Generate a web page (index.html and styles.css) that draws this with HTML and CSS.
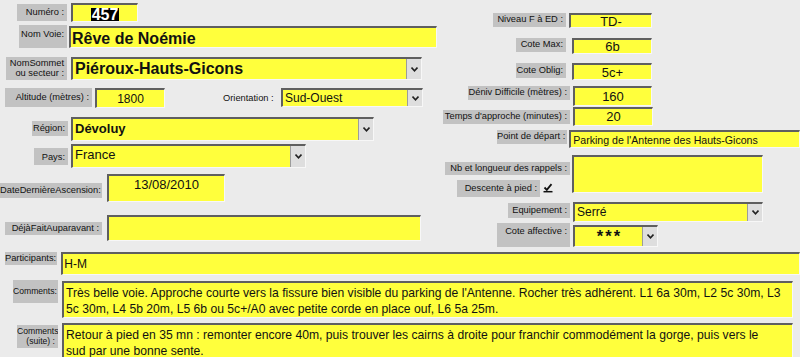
FILE: index.html
```html
<!DOCTYPE html>
<html lang="fr">
<head>
    <meta charset="UTF-8">
    <title>Fiche Voie</title>
    <link rel="stylesheet" href="styles.css">
</head>
<body>
    <div class="form">
        <div class="top">
            <!-- colonne gauche -->
            <div class="col-left">
                <div class="row r1">
                    <div class="lbl l-numero">Numéro :</div>
                    <div class="fld f-numero t-center"><span class="selected">457</span></div>
                </div>
                <div class="row r2">
                    <div class="lbl l-nomvoie">Nom Voie:</div>
                    <div class="fld f-nomvoie t-big">Rêve de Noémie</div>
                </div>
                <div class="row r3">
                    <div class="lbl l-sommet">NomSommet<br>ou secteur :</div>
                    <div class="fld combo f-sommet"><span class="val t-big">Piéroux-Hauts-Gicons</span><span class="drop"><svg width="7" height="5" viewBox="0 0 7 5"><path d="M0.5 0.5 L3.5 3.8 L6.5 0.5" fill="none" stroke="#222" stroke-width="1.6"/></svg></span></div>
                </div>
                <div class="row r4">
                    <div class="lbl l-altitude">Altitude (mètres) :</div>
                    <div class="fld f-altitude t-center t-12">1800</div>
                    <div class="plain l-orient">Orientation :</div>
                    <div class="fld combo f-orient"><span class="val t-12">Sud-Ouest</span><span class="drop"><svg width="7" height="5" viewBox="0 0 7 5"><path d="M0.5 0.5 L3.5 3.8 L6.5 0.5" fill="none" stroke="#222" stroke-width="1.6"/></svg></span></div>
                </div>
                <div class="row r5">
                    <div class="lbl l-region">Région:</div>
                    <div class="fld combo f-region"><span class="val t-13b">Dévoluy</span><span class="drop"><svg width="7" height="5" viewBox="0 0 7 5"><path d="M0.5 0.5 L3.5 3.8 L6.5 0.5" fill="none" stroke="#222" stroke-width="1.6"/></svg></span></div>
                </div>
                <div class="row r6">
                    <div class="lbl l-pays">Pays:</div>
                    <div class="fld combo f-pays"><span class="val t-13">France</span><span class="drop"><svg width="7" height="5" viewBox="0 0 7 5"><path d="M0.5 0.5 L3.5 3.8 L6.5 0.5" fill="none" stroke="#222" stroke-width="1.6"/></svg></span></div>
                </div>
                <div class="row r7">
                    <div class="lbl l-date">DateDernièreAscension:</div>
                    <div class="fld f-date t-center t-13">13/08/2010</div>
                </div>
                <div class="row r8">
                    <div class="lbl l-deja">DéjàFaitAuparavant :</div>
                    <div class="fld f-deja"></div>
                </div>
            </div>

            <!-- colonne droite -->
            <div class="col-right">
                <div class="row a1">
                    <div class="lbl l-niveau">Niveau F à ED :</div>
                    <div class="fld f-niveau t-center t-13">TD-</div>
                </div>
                <div class="row a2">
                    <div class="lbl l-cmax">Cote Max:</div>
                    <div class="fld f-cmax t-center t-13">6b</div>
                </div>
                <div class="row a3">
                    <div class="lbl l-coblig">Cote Oblig:</div>
                    <div class="fld f-coblig t-center t-13">5c+</div>
                </div>
                <div class="row a4">
                    <div class="lbl l-deniv">Déniv Difficile (mètres) :</div>
                    <div class="fld f-deniv t-center t-13">160</div>
                </div>
                <div class="row a5">
                    <div class="lbl l-temps">Temps d'approche (minutes) :</div>
                    <div class="fld f-temps t-center t-13">20</div>
                </div>
                <div class="row a6">
                    <div class="lbl l-depart">Point de départ :</div>
                    <div class="fld f-depart t-11">Parking de l'Antenne des Hauts-Gicons</div>
                </div>
                <div class="row a7">
                    <div class="stack">
                        <div class="lbl l-rappels">Nb et longueur des rappels :</div>
                        <div class="descente">
                            <div class="lbl l-descente">Descente à pied :</div>
                            <svg class="check" width="10" height="10" viewBox="0 0 10 10"><path d="M1.5 4.5 L3.8 6.8 L8.5 1.2" fill="none" stroke="#111" stroke-width="1.8"/><path d="M0.5 8.7 H9.5" stroke="#111" stroke-width="1.5"/></svg>
                        </div>
                    </div>
                    <div class="fld f-rappels"></div>
                </div>
                <div class="row a8">
                    <div class="lbl l-equip">Equipement :</div>
                    <div class="fld combo f-equip"><span class="val t-12">Serré</span><span class="drop"><svg width="7" height="5" viewBox="0 0 7 5"><path d="M0.5 0.5 L3.5 3.8 L6.5 0.5" fill="none" stroke="#222" stroke-width="1.6"/></svg></span></div>
                </div>
                <div class="row a9">
                    <div class="lbl l-affect">Cote affective :</div>
                    <div class="fld combo f-affect"><span class="val t-center stars">***</span><span class="drop"><svg width="7" height="5" viewBox="0 0 7 5"><path d="M0.5 0.5 L3.5 3.8 L6.5 0.5" fill="none" stroke="#222" stroke-width="1.6"/></svg></span></div>
                </div>
            </div>
        </div>

        <div class="bottom">
            <div class="row b1">
                <div class="lbl l-part">Participants:</div>
                <div class="fld f-part t-12">H-M</div>
            </div>
            <div class="row b2">
                <div class="lbl l-comm">Comments:</div>
                <div class="fld f-comm t-memo">Très belle voie. Approche courte vers la fissure bien visible du parking de l'Antenne. Rocher très adhérent. L1 6a 30m, L2 5c 30m, L3<br>5c 30m, L4 5b 20m, L5 6b ou 5c+/A0 avec petite corde en place ouf, L6 5a 25m.</div>
            </div>
            <div class="row b3">
                <div class="lbl l-suite">Comments<br>(suite) :</div>
                <div class="fld f-suite t-memo">Retour à pied en 35 mn : remonter encore 40m, puis trouver les cairns à droite pour franchir commodément la gorge, puis vers le<br>sud par une bonne sente.</div>
            </div>
        </div>
    </div>
</body>
</html>
```

FILE: styles.css
```css
body {
    margin: 0;
    background-color: #ebebeb;
    font-family: "Liberation Sans", Arial, sans-serif;
    color: #111;
}
.form {
    width: 800px;
    height: 357px;
    overflow: hidden;
}
.top {
    display: flex;
    height: 250px;
}
.col-left {
    width: 440px;
    padding-top: 3px;
    box-sizing: border-box;
}
.col-right {
    width: 360px;
    padding-top: 13px;
    box-sizing: border-box;
}
.row {
    display: flex;
    align-items: flex-start;
}

/* etiquettes grises */
.lbl {
    background-color: #c2c2c2;
    font-size: 9.3px;
    line-height: 11px;
    color: #111;
    text-align: right;
    padding: 2px 3px 0 0;
    box-sizing: border-box;
    white-space: nowrap;
    overflow: hidden;
}
.plain {
    font-size: 9.3px;
    line-height: 11px;
    color: #111;
    white-space: nowrap;
}

/* champs jaunes */
.fld {
    background-color: #ffff3c;
    border-top: 2px solid #5f5f5f;
    border-left: 2px solid #5f5f5f;
    border-right: 1px solid #f7f7f7;
    border-bottom: 1px solid #f7f7f7;
    box-sizing: border-box;
    padding: 0 2px;
    white-space: nowrap;
    overflow: hidden;
    color: #111;
}
.combo {
    display: flex;
    align-items: stretch;
    padding: 0;
}
.combo .val {
    flex: 1;
    padding-left: 2px;
    overflow: hidden;
}
.drop {
    width: 14px;
    flex: none;
    background-color: #dedede;
    border-left: 1px solid #9c9c9c;
    display: flex;
    align-items: center;
    justify-content: center;
}
.t-center { text-align: center; }
.t-big { font-size: 16px; font-weight: bold; line-height: 18px; }
.t-13b { font-size: 13px; font-weight: bold; line-height: 16px; }
.t-13 { font-size: 13px; line-height: 15px; }
.t-12 { font-size: 12px; line-height: 15px; }
.t-11 { font-size: 10.6px; line-height: 14px; }
.t-memo {
    font-size: 12.15px;
    line-height: 16px;
    padding: 2px 0 0 2px;
}
.stars {
    font-size: 16.5px;
    font-weight: bold;
    line-height: 18px;
    letter-spacing: 2px;
    padding-left: 4px;
}
.selected {
    display: inline-block;
    background: #000;
    color: #fff;
    font-size: 16px;
    font-weight: bold;
    line-height: 14px;
    margin-top: 3px;
    padding: 0 1px;
}

/* gauche */
.r1 { height: 22px; }
.r2 { height: 32px; }
.r3 { height: 31px; }
.r4 { height: 29px; }
.r5 { height: 27px; }
.r6 { height: 30px; }
.r7 { height: 41px; }
.r8 { height: 35px; }

.l-numero { margin: 1px 0 0 17px; width: 50px; height: 17px; padding-top: 3px; }
.f-numero { margin-left: 4px; width: 67px; height: 19px; }
.l-nomvoie { margin-left: 19px; width: 48px; height: 23px; padding-top: 4px; }
.f-nomvoie { margin: 1px 0 0 2px; width: 368px; height: 22px; padding: 2px 0 0 1px; }
.l-sommet { margin-left: 6px; width: 61px; height: 23px; padding-top: 1px; line-height: 10px; }
.f-sommet { margin-left: 4px; width: 351px; height: 23px; }
.f-sommet .val { padding-top: 1px; }
.l-altitude { margin-left: 5px; width: 87px; height: 19px; padding-top: 4px; }
.f-altitude { margin-left: 3px; width: 70px; height: 20px; padding-top: 2px; }
.l-orient { margin: 5px 0 0 58px; width: 52px; }
.f-orient { margin-left: 6px; width: 142px; height: 19px; }
.f-orient .val { padding-top: 1px; }
.l-region { margin: 4px 0 0 32px; width: 36px; height: 15px; }
.f-region { margin-left: 3px; width: 303px; height: 24px; }
.f-region .val { padding-top: 2px; }
.l-pays { margin: 4px 0 0 34px; width: 34px; height: 17px; padding-top: 4px; }
.f-pays { margin-left: 3px; width: 235px; height: 24px; }
.f-pays .val { padding-top: 1px; }
.l-date { margin: 9px 0 0 0; width: 102px; height: 15px; }
.f-date { margin-left: 5px; width: 118px; height: 28px; padding-top: 1px; }
.l-deja { margin: 7px 0 0 5px; width: 97px; height: 13px; padding-top: 1px; }
.f-deja { margin-left: 5px; width: 314px; height: 26px; }

/* droite */
.a1 { height: 25px; }
.a2 { height: 25px; }
.a3 { height: 23px; }
.a4 { height: 21px; }
.a5 { height: 23px; }
.a6 { height: 25px; }
.a7 { height: 47px; }
.a8 { height: 21px; }
.a9 { height: 27px; }

.l-niveau { margin-left: 53px; width: 73px; height: 14px; padding-top: 1px; }
.f-niveau { margin-left: 3px; width: 83px; height: 15px; line-height: 13px; }
.l-cmax { margin-left: 76px; width: 50px; height: 14px; padding-top: 1px; }
.f-cmax { margin-left: 6px; width: 80px; height: 16px; line-height: 14px; }
.l-coblig { margin-left: 76px; width: 50px; height: 15px; }
.f-coblig { margin-left: 6px; width: 80px; height: 17px; }
.l-deniv { margin-left: 28px; width: 102px; height: 14px; padding-top: 1px; }
.f-deniv { margin-left: 3px; width: 79px; height: 20px; padding-top: 1px; }
.l-temps { margin: 3px 0 0 3px; width: 127px; height: 14px; padding-top: 1px; }
.f-temps { margin-left: 3px; width: 80px; height: 19px; }
.l-depart { margin-left: 57px; width: 73px; height: 14px; padding-top: 1px; }
.f-depart { margin-left: 2px; width: 240px; height: 18px; padding-top: 1px; }
.stack { margin-left: 5px; width: 125px; }
.l-rappels { margin-top: 7px; width: 125px; height: 13px; padding-top: 1px; }
.descente { display: flex; align-items: flex-start; margin-top: 5px; }
.l-descente { margin-left: 12px; width: 83px; height: 17px; padding-top: 3px; }
.check { margin: 3px 0 0 3px; }
.f-rappels { margin-left: 2px; width: 191px; height: 38px; }
.l-equip { margin: 1px 0 0 68px; width: 62px; height: 15px; }
.f-equip { margin-left: 3px; width: 190px; height: 20px; }
.f-equip .val { padding-top: 1px; }
.l-affect { margin-left: 57px; width: 73px; height: 24px; padding-top: 3px; }
.f-affect { margin: 2px 0 0 3px; width: 85px; height: 22px; }

/* bas */
.bottom {
    padding-top: 2px;
}
.b1 { height: 28px; }
.b2 { height: 43px; }
.b3 { height: 40px; }
.l-part { margin-left: 5px; width: 53px; height: 13px; padding-top: 1px; }
.f-part { margin-left: 4px; width: 750px; height: 23px; padding: 3px 0 0 1px; }
.l-comm { margin-left: 13px; width: 45px; height: 23px; padding-top: 6px; font-size: 8.6px; }
.f-comm { margin: 1px 0 0 4px; width: 731px; height: 37px; }
.l-suite { margin: 2px 0 0 17px; width: 41px; height: 23px; padding-top: 1px; line-height: 10px; font-size: 8.6px; }
.f-suite { margin-left: 4px; width: 731px; height: 40px; }
```
